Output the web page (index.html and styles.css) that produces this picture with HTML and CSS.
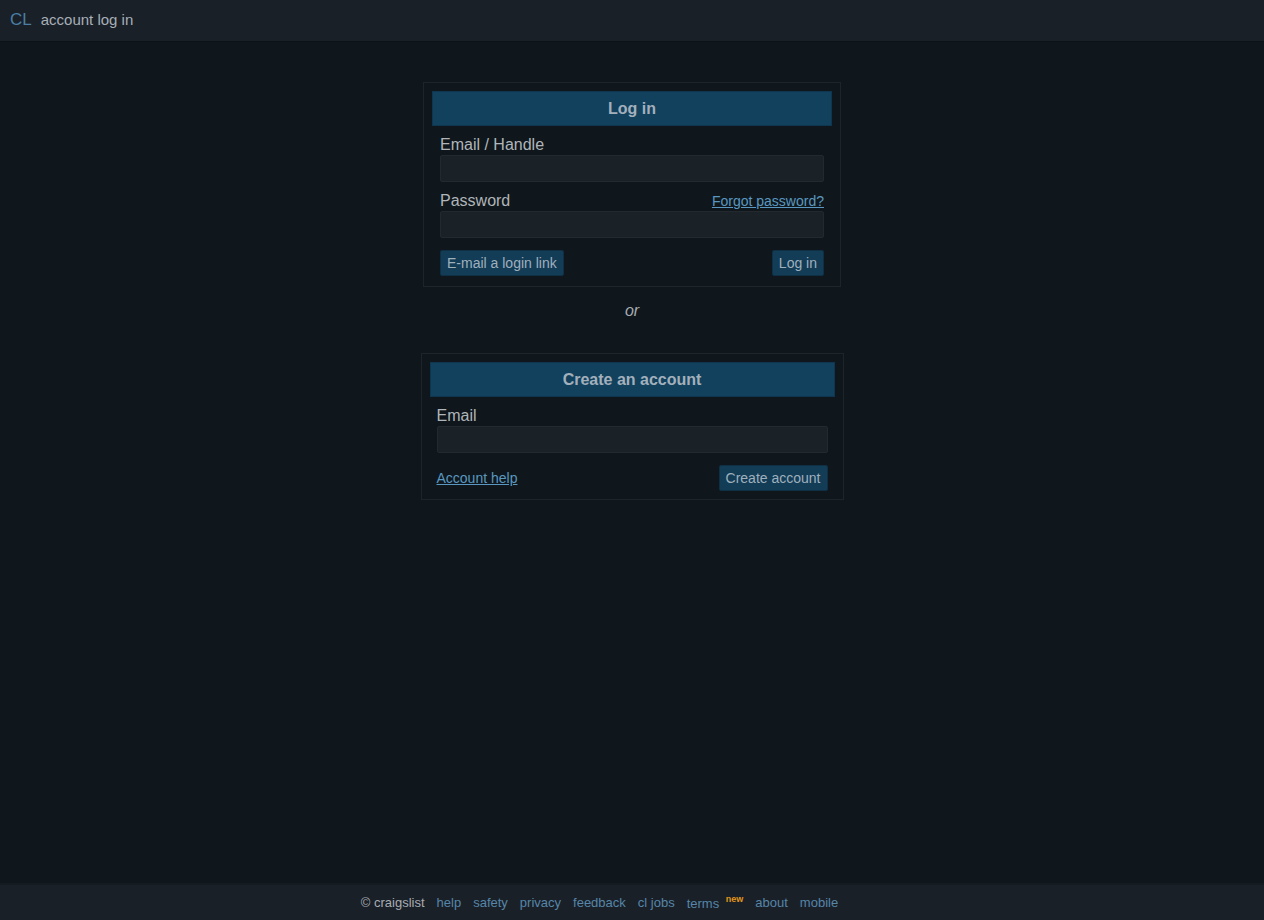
FILE: index.html
```html
<!DOCTYPE html>
<html>
<head>
<meta charset="utf-8">
<title>account log in</title>
<link rel="stylesheet" href="styles.css">
</head>
<body>
<header class="topbar">
  <a class="logo" href="#">CL</a>
  <span class="crumb">account log in</span>
</header>
<main class="main">
  <form class="box login-box">
    <div class="box-head">Log in</div>
    <div class="field">
      <label class="label" for="email">Email / Handle</label>
      <input class="input" id="email" type="text">
    </div>
    <div class="field">
      <div class="label-row">
        <label class="label" for="pw">Password</label>
        <a class="link small" href="#">Forgot password?</a>
      </div>
      <input class="input" id="pw" type="password">
    </div>
    <div class="actions">
      <button class="btn" type="button">E-mail a login link</button>
      <button class="btn" type="button">Log in</button>
    </div>
  </form>
  <div class="or">or</div>
  <form class="box create-box">
    <div class="box-head">Create an account</div>
    <div class="field">
      <label class="label" for="cemail">Email</label>
      <input class="input" id="cemail" type="text">
    </div>
    <div class="actions">
      <a class="link small" href="#">Account help</a>
      <button class="btn" type="button">Create account</button>
    </div>
  </form>
</main>
<footer class="footer">
  <span class="copy">© craigslist</span>
  <a class="flink" href="#">help</a>
  <a class="flink" href="#">safety</a>
  <a class="flink" href="#">privacy</a>
  <a class="flink" href="#">feedback</a>
  <a class="flink" href="#">cl jobs</a>
  <a class="flink" href="#">terms <sup class="new">new</sup></a>
  <a class="flink" href="#">about</a>
  <a class="flink" href="#">mobile</a>
</footer>
</body>
</html>
```
FILE: styles.css
```css
* { box-sizing: border-box; }
html, body { height: 100%; }
body {
  margin: 0;
  background: #0f171c;
  font-family: "Liberation Sans", Arial, sans-serif;
  color: #b3b8bd;
  display: flex;
  flex-direction: column;
}
.topbar {
  height: 42px;
  background: #1a2028;
  border-bottom: 1px solid #0c1216;
  display: flex;
  align-items: center;
  padding: 0 0 2px 10px;
  gap: 9px;
}
.logo {
  color: #4a7fa3;
  font-size: 17px;
  text-decoration: none;
}
.crumb {
  color: #a7afb7;
  font-size: 15px;
}
.main {
  flex: 1;
  display: flex;
  flex-direction: column;
  align-items: center;
  padding-top: 40px;
}
.box {
  border: 1px solid #1d252b;
  padding: 8px 8px 10px;
  display: flex;
  flex-direction: column;
}
.login-box { width: 418px; }
.create-box { width: 423px; padding-bottom: 8px; }
.box-head {
  height: 35px;
  background: #12415e;
  border: 1px solid #0f3650;
  color: #a3b0bc;
  font-weight: bold;
  font-size: 16px;
  display: flex;
  align-items: center;
  justify-content: center;
  margin-bottom: 10px;
}
.field {
  display: flex;
  flex-direction: column;
  padding: 0 8px;
  margin-bottom: 10px;
}
.create-box .field, .create-box .actions { padding: 0 7px; }
.label {
  font-size: 16px;
  line-height: 18px;
  color: #b0b5ba;
  margin-bottom: 1px;
}
.label-row {
  display: flex;
  justify-content: space-between;
  align-items: baseline;
}
.input {
  height: 27px;
  background: #1a2127;
  border: 1px solid #222a30;
  border-radius: 2px;
  color: #c0c4c8;
  font-size: 15px;
  padding: 2px 6px;
  outline: none;
}
.actions {
  display: flex;
  justify-content: space-between;
  align-items: center;
  padding: 0 8px;
  margin-top: 2px;
}
.btn {
  height: 26px;
  background: #133c57;
  border: 1px solid #0f2f45;
  border-radius: 2px;
  color: #9fb0bd;
  font-family: "Liberation Sans", Arial, sans-serif;
  font-size: 14px;
  padding: 0 6px;
}
.link {
  color: #5a97c0;
  text-decoration: underline;
}
.small { font-size: 14px; }
.or {
  font-style: italic;
  font-size: 16px;
  color: #a6acb2;
  margin: 15px 0 33px;
}
.footer {
  height: 37px;
  background: #1a2028;
  border-top: 2px solid #141b21;
  display: flex;
  justify-content: center;
  align-items: center;
  gap: 12px;
  font-size: 13px;
  padding-right: 65px;
}
.copy { color: #a7adb3; }
.flink { color: #5686a9; text-decoration: none; }
.new {
  color: #e0961c;
  font-weight: bold;
  font-size: 9px;
  vertical-align: 6px;
  margin-left: 3px;
}
```
